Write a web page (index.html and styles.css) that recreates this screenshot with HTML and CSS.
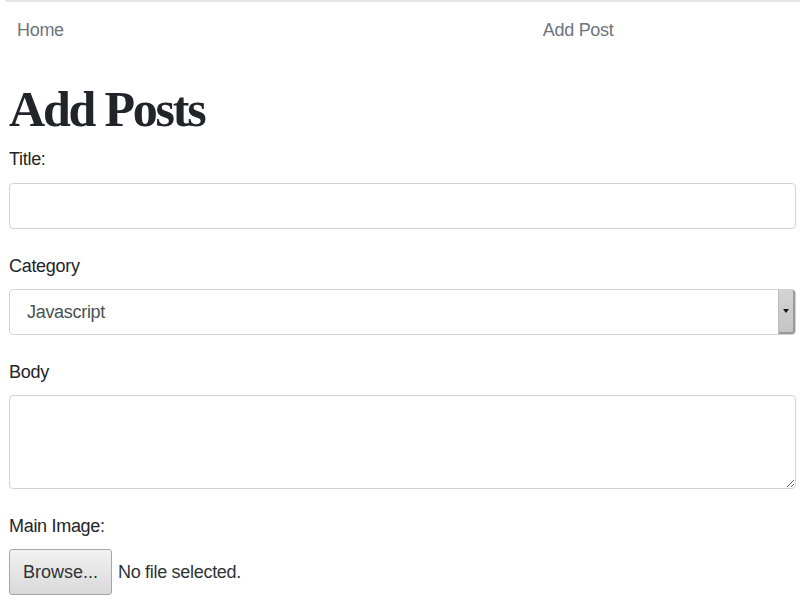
FILE: index.html
```html
<!DOCTYPE html>
<html>
<head>
<meta charset="utf-8">
<title>Add Posts</title>
<link rel="stylesheet" href="styles.css">
</head>
<body>
<nav class="navbar">
  <ul class="nav">
    <li><a href="#" class="nav-link">Home</a></li>
    <li><a href="#" class="nav-link">Add Post</a></li>
  </ul>
</nav>
<main class="container">
  <h1 class="title">Add Posts</h1>
  <form class="form">
    <div class="group">
      <label class="label">Title:</label>
      <input class="control" type="text">
    </div>
    <div class="group">
      <label class="label">Category</label>
      <div class="control select">
        <span class="select-text">Javascript</span>
        <span class="select-arrow"><span class="tri"></span></span>
      </div>
    </div>
    <div class="group">
      <label class="label">Body</label>
      <textarea class="control area"></textarea>
    </div>
    <div class="group last">
      <label class="label">Main Image:</label>
      <div class="file">
        <span class="file-btn">Browse...</span>
        <span class="file-text">No file selected.</span>
      </div>
    </div>
  </form>
</main>
</body>
</html>
```

FILE: styles.css
```css
html, body {
  margin: 0;
  padding: 0;
  background: #fff;
}
body {
  font-family: "Liberation Sans", Arial, sans-serif;
  font-size: 18px;
  line-height: 22px;
  color: #212529;
  letter-spacing: -0.3px;
}
.navbar {
  border-top: 2px solid #e6e6e6;
  margin-left: 5px;
  padding-top: 17px;
}
.nav {
  list-style: none;
  margin: 0;
  padding: 0 0 0 12px;
  display: flex;
  gap: 479px;
}
.nav-link {
  color: #6c757d;
  text-decoration: none;
}
.container {
  padding: 0 4px 0 9px;
}
.title {
  font-family: "Liberation Serif", "Times New Roman", serif;
  font-weight: bold;
  font-size: 50px;
  line-height: 60px;
  letter-spacing: -2.2px;
  margin: 38px 0 9px 0;
  color: #212529;
}
.form {
  display: flex;
  flex-direction: column;
  gap: 26px;
}
.group {
  display: flex;
  flex-direction: column;
}
.label {
  display: block;
  margin-bottom: 12px;
}
.control {
  box-sizing: border-box;
  width: 100%;
  height: 46px;
  border: 1px solid #ced4da;
  border-radius: 4px;
  background: #fff;
  font: inherit;
  color: #495057;
  padding: 0 17px;
  margin: 0;
}
.group:first-child .label {
  margin-bottom: 13px;
}
.select {
  display: flex;
  align-items: center;
  padding-right: 0;
}
.select-text {
  flex: 1;
}
.select-arrow {
  box-sizing: border-box;
  width: 17px;
  height: 44px;
  background: linear-gradient(#d4d4d4, #c4c4c4);
  border-right: 2px solid #9a9a9a;
  border-bottom: 2px solid #9a9a9a;
  border-left: 1px solid #bdbdbd;
  border-radius: 0 3px 3px 0;
  display: flex;
  align-items: center;
  justify-content: center;
}
.tri {
  width: 0;
  height: 0;
  border-left: 3px solid transparent;
  border-right: 3px solid transparent;
  border-top: 4px solid #111;
}
.area {
  height: 94px;
  resize: vertical;
  padding: 8px 17px;
}
.file {
  display: flex;
  align-items: center;
  gap: 6px;
}
.file-btn {
  box-sizing: border-box;
  width: 103px;
  height: 46px;
  display: flex;
  align-items: center;
  justify-content: center;
  border: 1px solid #a6a6a6;
  border-radius: 3px;
  background: linear-gradient(#f2f2f2, #d9d9d9);
  color: #2e3436;
  letter-spacing: 0;
}
.file-text {
  color: #2e3436;
}
```
